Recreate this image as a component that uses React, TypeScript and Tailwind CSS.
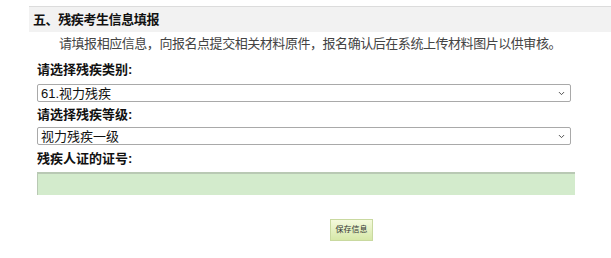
import { ChevronDown } from "lucide-react"

const fieldFont = { fontFamily: '"Liberation Sans", "Noto Sans CJK SC", sans-serif' }

function FakeSelect({ value }: { value: string }) {
  return (
    <div className="flex h-[18px] w-[534px] items-center justify-between rounded-[2px] border border-[#a9a9a9] bg-white pl-[3px] pr-[4px] text-[13px] leading-none text-[#111]">
      <span>{value}</span>
      <ChevronDown className="h-[9px] w-[9px] text-[#444]" strokeWidth={2.5} />
    </div>
  )
}

function Label({ children, className }: { children: string; className?: string }) {
  return <div className={`pl-[8px] text-[13px] font-bold leading-[16px] text-[#111] ${className ?? ""}`}>{children}</div>
}

export default function App() {
  return (
    <div className="h-[258px] w-[611px] bg-white pl-[29px] pt-[6px]" style={fieldFont}>
      <div className="flex h-[26px] items-center border-t border-[#dcdcdc] bg-[#f2f2f2] pl-[4px] text-[13px] font-bold tracking-[-0.4px] text-[#111]">
        五、残疾考生信息填报
      </div>

      <div className="mt-[4px] pl-[30px] text-[13px] leading-[16px] tracking-[-0.45px] text-[#444]">
        请填报相应信息，向报名点提交相关材料原件，报名确认后在系统上传材料图片以供审核。
      </div>

      <Label className="mt-[10px]">请选择残疾类别:</Label>
      <div className="mt-[6px] pl-[8px]">
        <FakeSelect value="61.视力残疾" />
      </div>

      <Label className="mt-[5px]">请选择残疾等级:</Label>
      <div className="mt-[4px] pl-[8px]">
        <FakeSelect value="视力残疾一级" />
      </div>

      <Label className="mt-[6px]">残疾人证的证号:</Label>
      <div className="mt-[5px] pl-[8px]">
        <div className="h-[23px] w-[538px] border-t-2 border-l border-[#b9c9b4] bg-[#d3ebcc]" />
      </div>

      <div className="mt-[24px] pl-[301px]">
        <button className="flex h-[22px] w-[43px] items-center justify-center border border-[#c9d9a0] bg-gradient-to-b from-[#f4f9dc] to-[#d6e8a8] text-[8px] text-[#333]">
          保存信息
        </button>
      </div>
    </div>
  )
}
